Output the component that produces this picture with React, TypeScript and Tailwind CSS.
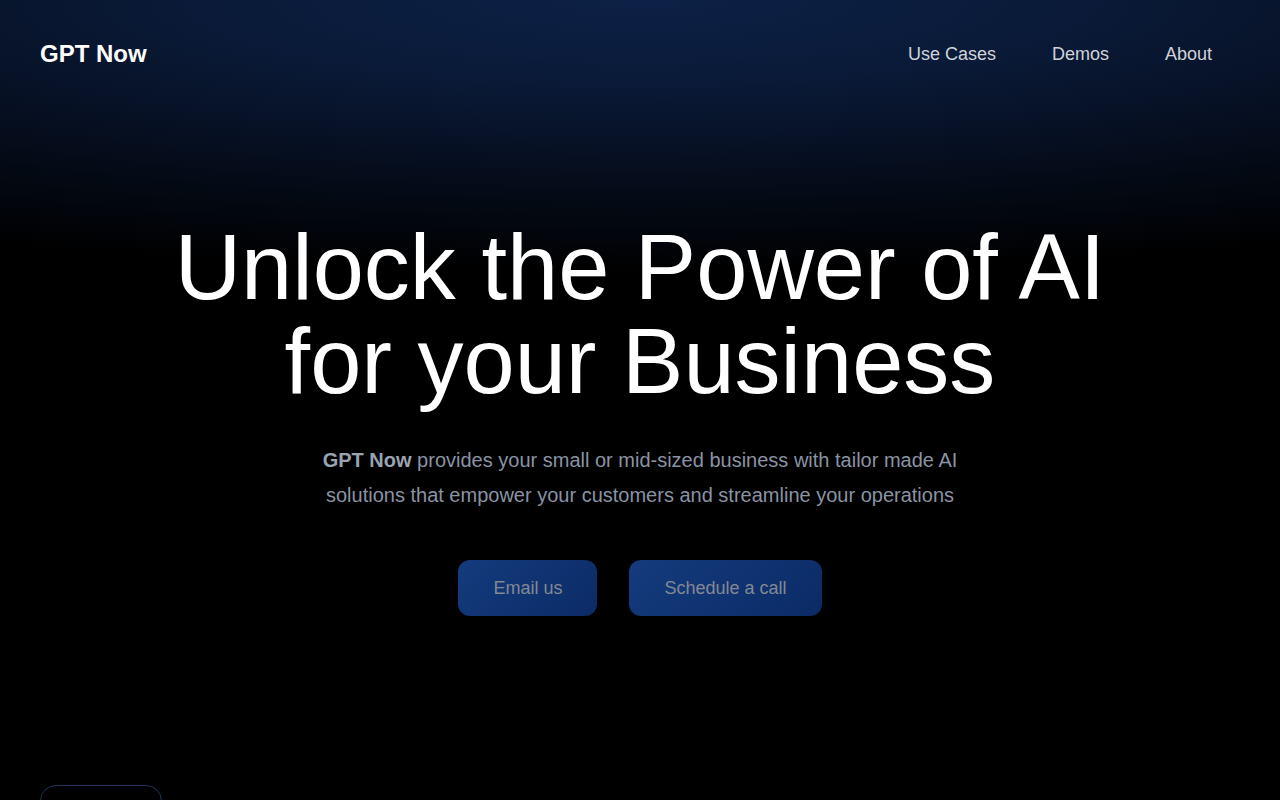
import React from 'react';

const navLinks = ['Use Cases', 'Demos', 'About'];

export default function App() {
  return (
    <div
      className="min-h-screen h-[800px] overflow-hidden bg-black bg-[radial-gradient(ellipse_115%_34%_at_50%_0%,#0d2146_0%,#0a1a38_30%,#050d1c_65%,#000000_100%)] text-white"
      style={{ fontFamily: '"Liberation Sans", Arial, sans-serif' }}
    >
      <header className="h-[107px] flex items-center justify-between pl-10 pr-10">
        <a href="#" className="text-2xl font-bold text-white">
          GPT Now
        </a>
        <nav className="flex items-center">
          {navLinks.map((link) => (
            <a key={link} href="#" className="px-7 text-lg text-[#cfd3d9]">
              {link}
            </a>
          ))}
        </nav>
      </header>

      <main className="flex flex-col items-center pt-[113px]">
        <h1 className="text-center text-[92px] leading-[94px] font-normal text-white">
          Unlock the Power of AI
          <br />
          for your Business
        </h1>
        <p className="mt-[35px] max-w-2xl text-center text-xl leading-[35px] text-[#8a93a3]">
          <span className="font-bold text-[#9aa3b1]">GPT Now</span> provides your small or mid-sized
          business with tailor made AI solutions that empower your customers and streamline your
          operations
        </p>
        <div className="mt-[47px] flex items-center gap-8">
          <button className="h-14 px-[35px] rounded-xl bg-[linear-gradient(135deg,#143b7d,#0b2b66)] text-lg text-[#838893]">
            Email us
          </button>
          <button className="h-14 px-[35px] rounded-xl bg-[linear-gradient(135deg,#143b7d,#0b2b66)] text-lg text-[#838893]">
            Schedule a call
          </button>
        </div>
      </main>

      <div className="mt-[169px] px-10">
        <div className="w-[122px] h-16 rounded-2xl border border-[#1e3358]" />
      </div>
    </div>
  );
}
